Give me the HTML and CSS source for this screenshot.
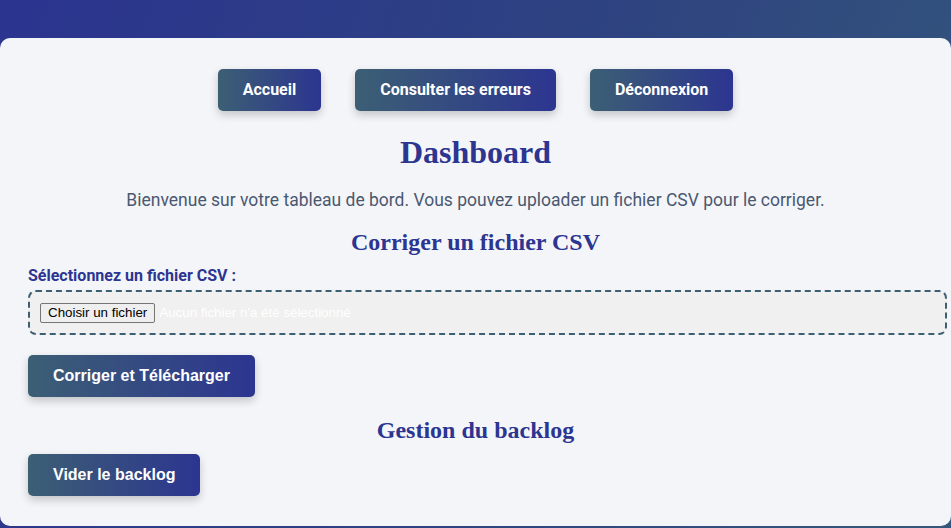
FILE: index.html
```html
<!DOCTYPE html>
<html lang="fr">
<head>
<meta charset="utf-8">
<title>Dashboard</title>
<link rel="stylesheet" href="styles.css">
</head>
<body>
<div class="container">
  <nav class="nav">
    <a class="nav-btn" href="#">Accueil</a>
    <a class="nav-btn" href="#">Consulter les erreurs</a>
    <a class="nav-btn" href="#">Déconnexion</a>
  </nav>
  <h1 class="title">Dashboard</h1>
  <p class="intro">Bienvenue sur votre tableau de bord. Vous pouvez uploader un fichier CSV pour le corriger.</p>
  <h2 class="section-title">Corriger un fichier CSV</h2>
  <form class="upload-form">
    <label class="field-label">Sélectionnez un fichier CSV :</label>
    <div class="file-box">
      <span class="file-btn">Choisir un fichier</span>
      <span class="file-name">Aucun fichier n'a été sélectionné</span>
    </div>
    <button type="button" class="action-btn action-first">Corriger et Télécharger</button>
  </form>
  <h2 class="section-title backlog-title">Gestion du backlog</h2>
  <button type="button" class="action-btn">Vider le backlog</button>
</div>
</body>
</html>
```

FILE: styles.css
```css
html, body {
  margin: 0;
  padding: 0;
}
body {
  background: linear-gradient(110deg, #2b348f 0%, #2e4380 55%, #34587a 100%);
  min-height: 528px;
  font-family: Roboto, "Liberation Sans", sans-serif;
  overflow: hidden;
}
.container {
  margin-top: 38px;
  background: #f4f5f9;
  border-radius: 10px;
  padding: 31px 28px 30px;
  height: 427px;
}
.nav {
  display: flex;
  justify-content: center;
  gap: 34px;
}
.nav-btn {
  display: block;
  padding: 12px 25px;
  background: linear-gradient(to right, #3c5f74, #2c3590);
  color: #fff;
  font-family: Roboto, sans-serif;
  font-weight: 700;
  font-size: 16px;
  line-height: 18px;
  text-decoration: none;
  border-radius: 5px;
  box-shadow: 0 4px 8px rgba(0, 0, 0, 0.2);
}
.title {
  margin: 23px 0 0;
  text-align: center;
  font-family: "Liberation Serif", serif;
  font-size: 32px;
  line-height: 37px;
  font-weight: 700;
  color: #2c3590;
}
.intro {
  margin: 19px 0 0;
  text-align: center;
  font-size: 17.5px;
  line-height: 21px;
  color: #4a5870;
}
.section-title {
  margin: 17px 0 0;
  text-align: center;
  font-family: "Liberation Serif", serif;
  font-size: 24px;
  line-height: 28px;
  font-weight: 700;
  color: #2c3590;
}
.upload-form {
  margin-top: 10px;
}
.field-label {
  display: block;
  font-weight: 700;
  font-size: 16px;
  line-height: 19px;
  color: #2c3590;
}
.file-box {
  margin-top: 5px;
  width: 100%;
  padding: 10px 10px 10px;
  border: 2px dashed #3c5f74;
  border-radius: 8px;
  background: #f0f0f0;
  display: flex;
  align-items: center;
  gap: 4px;
  height: 21px;
  box-sizing: content-box;
}
.file-btn {
  font-family: "Liberation Sans", Arial, sans-serif;
  font-size: 13.33px;
  line-height: 16px;
  color: #000;
  background: #efefef;
  border: 1px solid #767676;
  border-radius: 2px;
  padding: 1px 7px;
}
.file-name {
  font-family: "Liberation Sans", Arial, sans-serif;
  font-size: 13.33px;
  color: #ffffff;
}
.action-btn {
  display: block;
  border: none;
  padding: 12px 25px;
  background: linear-gradient(to right, #3c5f74, #2c3590);
  color: #fff;
  font-family: "Liberation Sans", Arial, sans-serif;
  font-weight: 700;
  font-size: 16px;
  line-height: 18px;
  border-radius: 5px;
  box-shadow: 0 4px 8px rgba(0, 0, 0, 0.2);
}
.action-first {
  margin-top: 20px;
}
.backlog-title {
  margin-top: 19px;
  margin-bottom: 10px;
}
```
